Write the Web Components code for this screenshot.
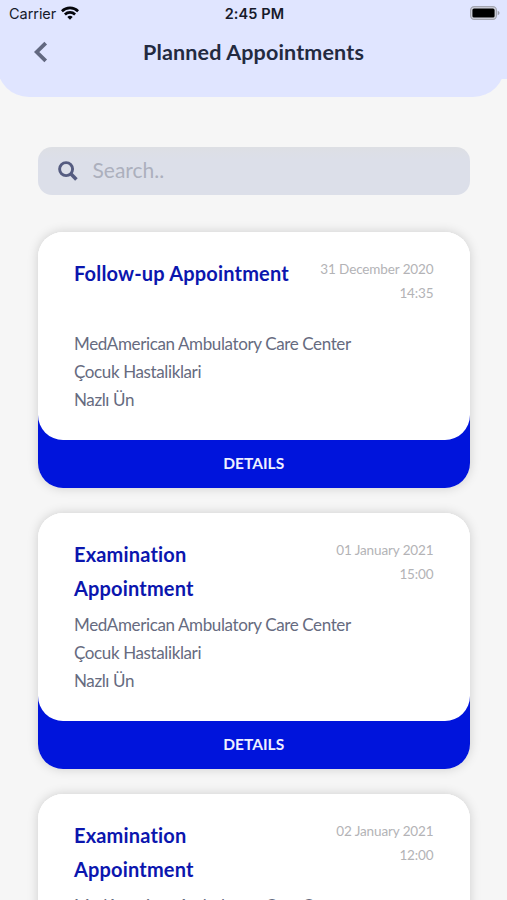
<!DOCTYPE html>
<html lang="en">
<head>
<meta charset="utf-8">
<title>Planned Appointments</title>
<style>
  html, body {
    margin: 0;
    height: 100%;
    overflow: hidden;
    background: #f6f6f6;
  }
</style>
</head>
<body>
<appointments-page></appointments-page>
<script>
customElements.define('status-bar', class StatusBar extends HTMLElement {
  constructor() {
    super();
    this.attachShadow({mode: 'open'})
    this.shadowRoot.innerHTML = this.template
  }
  get template() {
    return `<style>
    :host {
      display: grid;
      grid-template-columns: 1fr auto 1fr;
      align-items: center;
      height: 27px;
      padding: 0 7px 0 9px;
      box-sizing: border-box;
      font: 14.5px/27px Inter, sans-serif;
      color: #161a2a;
    }
    .carrier {
      display: flex;
      align-items: center;
      gap: 5px;
      letter-spacing: -0.05px;
    }
    .time {
      font-size: 14.5px;
      font-weight: 600;
      letter-spacing: 0.1px;
    }
    .battery {
      justify-self: end;
    }
    svg {
      display: block;
      position: relative;
      top: -1px;
    }
    </style>
    <span class="carrier">
      <span>Carrier</span>
      <svg width="18" height="14" viewBox="0 0 18 14" fill="none" stroke="#05060c" stroke-width="2.6">
        <path d="M.9 5.2a11.6 11.6 0 0 1 16.2 0"/>
        <path d="M3.9 8.5a7.3 7.3 0 0 1 10.2 0"/>
        <path d="M9 13.8 6.3 11a4 4 0 0 1 5.4 0z" fill="#05060c" stroke="none"/>
      </svg>
    </span>
    <span class="time">2:45 PM</span>
    <svg class="battery" width="30" height="14" viewBox="0 0 30 14">
      <rect x=".6" y=".6" width="25.8" height="12.8" rx="3.6" fill="#d3d5df" stroke="#a3a5b1" stroke-width="1.2"/>
      <rect x="2.4" y="2.4" width="22.2" height="9.2" rx="1.6" fill="#000"/>
      <path d="M27.7 4.8c2.4.8 2.4 3.6 0 4.4z" fill="#9b9da9"/>
    </svg>`
  }
});

customElements.define('page-header', class PageHeader extends HTMLElement {
  constructor() {
    super();
    this.attachShadow({mode: 'open'})
    this.shadowRoot.innerHTML = this.template
  }
  get template() {
    return `<style>
    :host {
      display: block;
      height: 97px;
      margin: 0 2px 0 -3px;
      padding: 0 0 0 3px;
      box-sizing: border-box;
      border-radius: 0 0 32px 32px;
      background: #e0e5ff;
    }
    status-bar, .row {
      margin-right: -2px;
    }
    .row {
      display: grid;
      grid-template-columns: 1fr auto 1fr;
      align-items: center;
      height: 50px;
      padding: 0 33px;
    }
    h1 {
      margin: 0;
      font-size: 21.5px;
      font-weight: 700;
      line-height: 30px;
      letter-spacing: 0.15px;
      color: #232a40;
      white-space: nowrap;
    }
    </style>
    <status-bar></status-bar>
    <div class="row">
      <svg width="15" height="22" viewBox="0 0 15 22" fill="none" stroke="#626880" stroke-width="3.8">
        <path d="M12.7 2.1 3.7 11l9 8.9"/>
      </svg>
      <h1><slot></slot></h1>
    </div>`
  }
});

customElements.define('search-field', class SearchField extends HTMLElement {
  constructor() {
    super();
    this.attachShadow({mode: 'open'})
    this.shadowRoot.innerHTML = this.template
  }
  get template() {
    return `<style>
    :host {
      display: flex;
      align-items: center;
      gap: 15px;
      height: 48px;
      padding: 0 20px;
      box-sizing: border-box;
      border-radius: 14px;
      background: linear-gradient(#dddfe4, #dcdfe9 25%);
      font-size: 21px;
      line-height: 46px;
      color: #acb0bd;
    }
    span {
      height: 48px;
    }
    </style>
    <svg width="20" height="20" viewBox="0 0 20 20" fill="none" stroke="#555c80">
      <circle cx="8.1" cy="8.1" r="6.5" stroke-width="2.9"/>
      <path d="m12.8 12.8 5.6 5.6" stroke-width="3.6"/>
    </svg>
    <span><slot></slot></span>`
  }
});

customElements.define('appointment-card', class AppointmentCard extends HTMLElement {
  constructor() {
    super();
    this.attachShadow({mode: 'open'})
    this.shadowRoot.innerHTML = this.template
  }
  get template() {
    return `<style>
    :host {
      display: block;
      flex: none;
      border-radius: 25px;
      background: linear-gradient(#fff 50%, #0014dc 50%);
      box-shadow: 0 0 11px rgba(0, 0, 0, 0.17);
    }
    .content {
      height: 207.5px;
      padding: 24px 36.5px 0;
      box-sizing: border-box;
      border-radius: 25px;
      background: #fff;
    }
    .top {
      display: flex;
      justify-content: space-between;
      height: 69px;
      margin-bottom: 5px;
    }
    h2 {
      width: 222px;
      margin: 0;
      font-size: 20px;
      font-weight: 700;
      line-height: 34px;
      letter-spacing: 0.17px;
      color: #0b16ae;
    }
    .when {
      display: flex;
      flex-direction: column;
      padding-top: 1px;
      text-align: right;
      font-size: 13.5px;
      line-height: 24px;
      letter-spacing: -0.12px;
      color: #b3b3b6;
      white-space: nowrap;
    }
    .info {
      display: flex;
      flex-direction: column;
      font-size: 17px;
      line-height: 28px;
      letter-spacing: -0.38px;
      color: #666b80;
    }
    .details {
      height: 48.5px;
      text-align: center;
      font-size: 15.5px;
      font-weight: 700;
      line-height: 46px;
      color: #eef0ff;
    }
    </style>
    <div class="content">
      <div class="top">
        <h2><slot name="title"></slot></h2>
        <div class="when">
          <slot name="date"></slot>
          <slot name="time"></slot>
        </div>
      </div>
      <div class="info"><slot></slot></div>
    </div>
    <div class="details">DETAILS</div>`
  }
});

customElements.define('appointments-page', class AppointmentsPage extends HTMLElement {
  constructor() {
    super();
    this.attachShadow({mode: 'open'})
    this.shadowRoot.innerHTML = this.template
  }
  get template() {
    return `<style>
    :host {
      display: block;
      height: 900px;
      overflow: hidden;
      font-family: Lato, "Noto Sans", sans-serif;
      font-variant-ligatures: none;
      background: linear-gradient(#e0e5ff 79px, #f6f6f6 79px);
    }
    main {
      display: flex;
      flex-direction: column;
      gap: 25px;
      padding: 50px 37px 0 37.5px;
    }
    search-field {
      margin-bottom: 12px;
    }
    </style>
    <page-header>Planned Appointments</page-header>
    <main>
      <search-field>Search..</search-field>
      <appointment-card>
        <span slot="title">Follow-up Appointment</span>
        <span slot="date">31 December 2020</span>
        <span slot="time">14:35</span>
        <span>MedAmerican Ambulatory Care Center</span>
        <span>Çocuk Hastaliklari</span>
        <span>Nazlı Ün</span>
      </appointment-card>
      <appointment-card>
        <span slot="title">Examination Appointment</span>
        <span slot="date">01 January 2021</span>
        <span slot="time">15:00</span>
        <span>MedAmerican Ambulatory Care Center</span>
        <span>Çocuk Hastaliklari</span>
        <span>Nazlı Ün</span>
      </appointment-card>
      <appointment-card>
        <span slot="title">Examination Appointment</span>
        <span slot="date">02 January 2021</span>
        <span slot="time">12:00</span>
        <span>MedAmerican Ambulatory Care Center</span>
      </appointment-card>
    </main>`
  }
});
</script>
</body>
</html>
